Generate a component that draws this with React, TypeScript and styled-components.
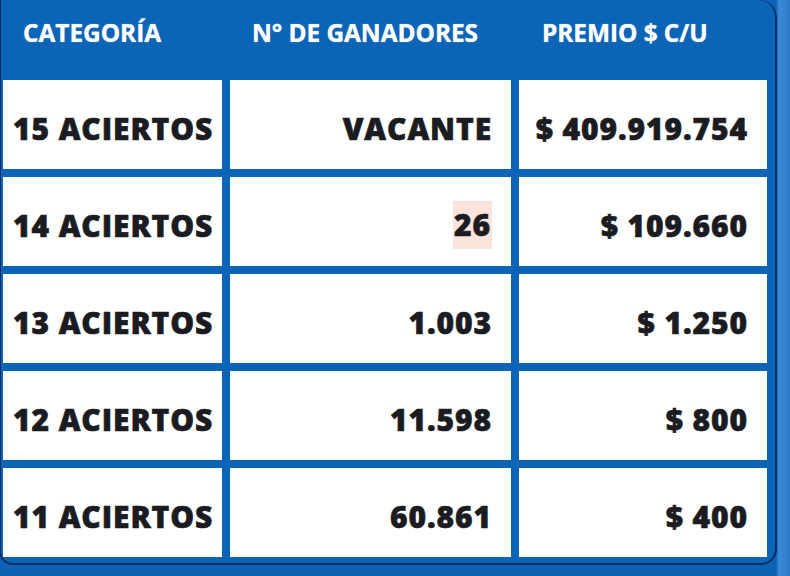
import React from "react";
import styled, { createGlobalStyle } from "styled-components";

const Global = createGlobalStyle`
  html, body { margin: 0; padding: 0; }
  body {
    width: 790px;
    height: 576px;
    overflow: hidden;
    background: #1a6ec2;
    font-family: "Open Sans", "Noto Sans", sans-serif;
  }
`;

const Backdrop = styled.div`
  width: 790px;
  height: 576px;
  display: flex;
  align-items: flex-start;
  background: linear-gradient(90deg, #0c63b4 0px, #0c63b4 776px, #3d8bd6 779px, #2a79c8 790px);
`;

const Panel = styled.div`
  box-sizing: border-box;
  width: 778px;
  height: 565px;
  margin-left: -1px;
  background: #0b64b6;
  border: 2px solid #0b2c64;
  border-top: none;
  border-radius: 0 18px 16px 14px;
  padding: 0 6px 5px 2px;
  display: grid;
  grid-template-columns: 219px 281px 248px;
  grid-template-rows: 72px repeat(5, 89px);
  column-gap: 8px;
  row-gap: 8px;
  align-content: start;
`;

const HeaderCell = styled.div<{ $pad: number }>`
  color: #ffffff;
  font-family: "Open Sans", "Noto Sans", sans-serif;
  font-weight: 700;
  font-size: 24.5px;
  letter-spacing: -0.1px;
  padding-left: ${(p) => p.$pad}px;
  padding-top: 15px;
  line-height: 36px;
  text-shadow: 0 0 1px rgba(210, 230, 255, 0.9);
  white-space: nowrap;
`;

const Cell = styled.div<{ $align: "left" | "right" }>`
  background: #ffffff;
  display: flex;
  align-items: center;
  justify-content: ${(p) => (p.$align === "left" ? "flex-start" : "flex-end")};
  padding: 7px 19px 0 10px;
  color: #1b1b22;
  font-family: "Open Sans", "Noto Sans", sans-serif;
  font-weight: 800;
  font-size: 30px;
  letter-spacing: 0.9px;
  -webkit-text-stroke: 0.6px #1b1b22;
  white-space: nowrap;
`;

const Highlight = styled.span`
  background: #fbe4dc;
  line-height: 48px;
  padding: 0 1px;
`;

type Row = { cat: string; winners: string; prize: string; mark?: boolean };

const rows: Row[] = [
  { cat: "15 ACIERTOS", winners: "VACANTE", prize: "$ 409.919.754" },
  { cat: "14 ACIERTOS", winners: "26", prize: "$ 109.660", mark: true },
  { cat: "13 ACIERTOS", winners: "1.003", prize: "$ 1.250" },
  { cat: "12 ACIERTOS", winners: "11.598", prize: "$ 800" },
  { cat: "11 ACIERTOS", winners: "60.861", prize: "$ 400" },
];

export default function App() {
  return (
    <>
      <Global />
      <Backdrop>
        <Panel>
          <HeaderCell $pad={20}>CATEGORÍA</HeaderCell>
          <HeaderCell $pad={22}>N° DE GANADORES</HeaderCell>
          <HeaderCell $pad={23}>PREMIO $ C/U</HeaderCell>
          {rows.map((r, i) => (
            <React.Fragment key={i}>
              <Cell $align="left">{r.cat}</Cell>
              <Cell $align="right">
                {r.mark ? <Highlight>{r.winners}</Highlight> : r.winners}
              </Cell>
              <Cell $align="right">{r.prize}</Cell>
            </React.Fragment>
          ))}
        </Panel>
      </Backdrop>
    </>
  );
}
